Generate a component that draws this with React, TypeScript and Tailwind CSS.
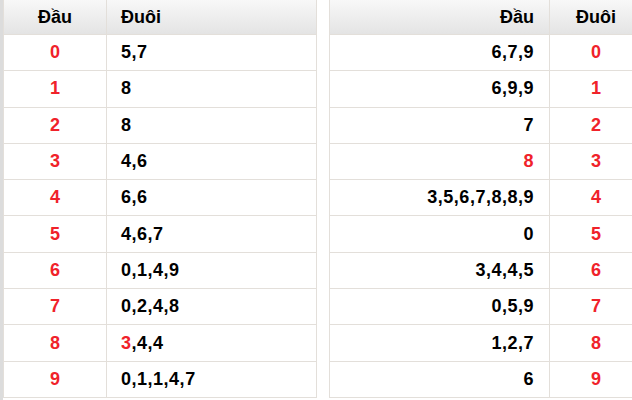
const left: { dau: string; duoi: string; hot?: number }[] = [
  { dau: '0', duoi: '5,7' },
  { dau: '1', duoi: '8' },
  { dau: '2', duoi: '8' },
  { dau: '3', duoi: '4,6' },
  { dau: '4', duoi: '6,6' },
  { dau: '5', duoi: '4,6,7' },
  { dau: '6', duoi: '0,1,4,9' },
  { dau: '7', duoi: '0,2,4,8' },
  { dau: '8', duoi: '3,4,4', hot: 0 },
  { dau: '9', duoi: '0,1,1,4,7' },
];

const right: { dau: string; hot?: number }[] = [
  { dau: '6,7,9' },
  { dau: '6,9,9' },
  { dau: '7' },
  { dau: '8', hot: 0 },
  { dau: '3,5,6,7,8,8,9' },
  { dau: '0' },
  { dau: '3,4,4,5' },
  { dau: '0,5,9' },
  { dau: '1,2,7' },
  { dau: '6' },
];

// the digit of the special prize is shown in red
function Digits({ value, hot }: { value: string; hot?: number }) {
  const parts = value.split(',');
  return (
    <>
      {parts.map((d, i) => (
        <span key={i}>
          <span className={i === hot ? 'text-[#f0222a]' : ''}>{d}</span>
          {i < parts.length - 1 && ','}
        </span>
      ))}
    </>
  );
}

const headCell = 'h-[35px] border-b border-[#e3dfda] flex items-center bg-gradient-to-b from-[#f8f8f8] to-[#e4e4e4]';
const bodyCell = 'h-[36.3px] border-b border-[#e3dfda] flex items-center';

export default function App() {
  return (
    <div
      className="w-[632px] h-[400px] overflow-hidden bg-white flex text-black font-bold text-[18px]"
      style={{ fontFamily: '"Liberation Sans", Arial, sans-serif' }}
    >
      <div className="w-[3px] shrink-0 bg-[#dcdcdc]" />

      <div className="w-[314px] shrink-0 border-l border-r border-[#e3dfda] self-start grid grid-cols-[103px_1fr]">
        <div className={`${headCell} justify-center border-r`}>Đầu</div>
        <div className={`${headCell} pl-[14px]`}>Đuôi</div>
        {left.map((r) => (
          <div key={r.dau} className="contents">
            <div className={`${bodyCell} justify-center border-r text-[#f0222a]`}>{r.dau}</div>
            <div className={`${bodyCell} pl-[14px] tracking-[0.5px]`}>
              <Digits value={r.duoi} hot={r.hot} />
            </div>
          </div>
        ))}
      </div>

      <div className="w-[12px] shrink-0" />

      <div className="w-[314px] shrink-0 border-l border-r border-[#e3dfda] self-start grid grid-cols-[220px_1fr]">
        <div className={`${headCell} justify-end pr-[15px] border-r`}>Đầu</div>
        <div className={`${headCell} justify-center`}>Đuôi</div>
        {right.map((r, i) => (
          <div key={i} className="contents">
            <div className={`${bodyCell} justify-end pr-[15px] border-r tracking-[0.5px]`}>
              <Digits value={r.dau} hot={r.hot} />
            </div>
            <div className={`${bodyCell} justify-center text-[#f0222a]`}>{i}</div>
          </div>
        ))}
      </div>
    </div>
  );
}
